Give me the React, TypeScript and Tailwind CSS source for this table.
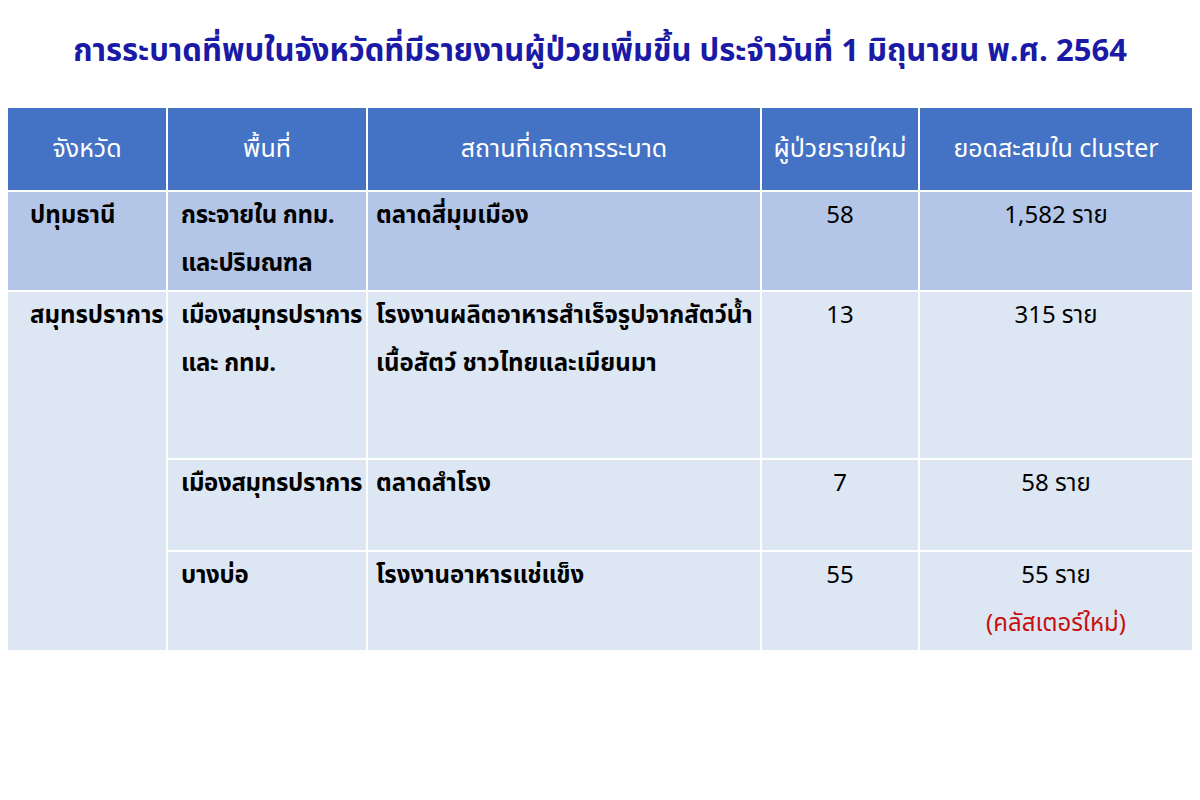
const thai = { fontFamily: '"Noto Sans Thai", "Noto Sans", "Liberation Sans", sans-serif' }

const rows = [
  {
    province: "ปทุมธานี",
    span: 1,
    bg: "bg-[#b4c6e7]",
    h: "h-[98px]",
    area: ["กระจายใน กทม.", "และปริมณฑล"],
    place: ["ตลาดสี่มุมเมือง"],
    newCases: "58",
    total: "1,582 ราย",
  },
  {
    province: "สมุทรปราการ",
    span: 3,
    bg: "bg-[#dde6f3]",
    h: "h-[166px]",
    area: ["เมืองสมุทรปราการ", "และ กทม."],
    place: ["โรงงานผลิตอาหารสำเร็จรูปจากสัตว์น้ำ", "เนื้อสัตว์ ชาวไทยและเมียนมา"],
    newCases: "13",
    total: "315 ราย",
  },
  {
    province: null,
    span: 0,
    bg: "bg-[#dde6f3]",
    h: "h-[90px]",
    area: ["เมืองสมุทรปราการ"],
    place: ["ตลาดสำโรง"],
    newCases: "7",
    total: "58 ราย",
  },
  {
    province: null,
    span: 0,
    bg: "bg-[#dde6f3]",
    h: "h-[98px]",
    area: ["บางบ่อ"],
    place: ["โรงงานอาหารแช่แข็ง"],
    newCases: "55",
    total: "55 ราย",
    note: "(คลัสเตอร์ใหม่)",
  },
]

export default function App() {
  return (
    <div className="w-[1200px] h-[800px] bg-white" style={thai}>
      <h1 className="pt-[30px] h-[106px] text-center text-[31px] font-bold leading-[44px] text-[#1a1aa6] whitespace-nowrap">
        การระบาดที่พบในจังหวัดที่มีรายงานผู้ป่วยเพิ่มขึ้น ประจำวันที่ 1 มิถุนายน พ.ศ. 2564
      </h1>
      <table className="ml-[6px] w-[1188px] table-fixed border-separate border-spacing-[2px] text-[24px] leading-[48px] text-black">
        <thead>
          <tr className="h-[82px] bg-[#4472c4] text-white text-[25px]">
            <th className="w-[158px] p-0 font-normal">จังหวัด</th>
            <th className="w-[198px] p-0 font-normal">พื้นที่</th>
            <th className="w-[392px] p-0 font-normal">สถานที่เกิดการระบาด</th>
            <th className="w-[156px] p-0 font-normal whitespace-nowrap">ผู้ป่วยรายใหม่</th>
            <th className="p-0 font-normal">ยอดสะสมใน cluster</th>
          </tr>
        </thead>
        <tbody>
          {rows.map((r, i) => (
            <tr key={i} className={r.h}>
              {r.span > 0 && (
                <td rowSpan={r.span} className={`${r.bg} align-top p-0 pl-[22px] font-bold whitespace-nowrap`}>
                  {r.province}
                </td>
              )}
              <td className={`${r.bg} align-top p-0 pl-[13px] font-bold tracking-[-0.3px] whitespace-nowrap`}>
                {r.area.map((t) => (
                  <div key={t}>{t}</div>
                ))}
              </td>
              <td className={`${r.bg} align-top p-0 pl-[8px] font-bold whitespace-nowrap`}>
                {r.place.map((t) => (
                  <div key={t}>{t}</div>
                ))}
              </td>
              <td className={`${r.bg} align-top p-0 text-center`}>{r.newCases}</td>
              <td className={`${r.bg} align-top p-0 text-center`}>
                <div>{r.total}</div>
                {r.note && <div className="text-[#c81010]">{r.note}</div>}
              </td>
            </tr>
          ))}
        </tbody>
      </table>
    </div>
  )
}
